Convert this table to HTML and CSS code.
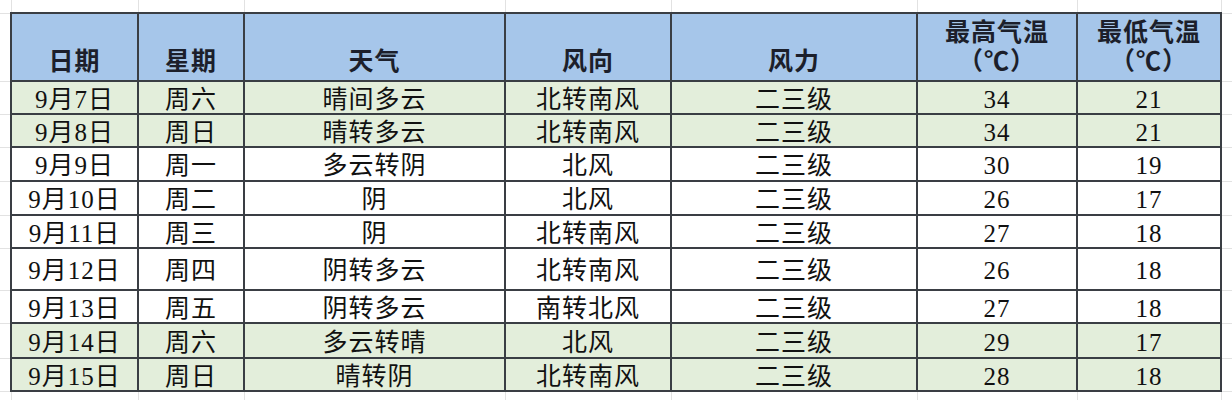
FILE: index.html
```html
<!DOCTYPE html>
<html lang="zh-CN">
<head>
<meta charset="utf-8">
<title>天气预报</title>
<link rel="stylesheet" href="styles.css">
</head>
<body>
<table class="sheet">
  <colgroup>
    <col class="c-edge-l">
    <col class="c-date">
    <col class="c-week">
    <col class="c-weather">
    <col class="c-dir">
    <col class="c-force">
    <col class="c-hi">
    <col class="c-lo">
    <col class="c-edge-r">
  </colgroup>
  <tr class="r-top"><td class="g"></td><td class="g"></td><td class="g"></td><td class="g"></td><td class="g"></td><td class="g"></td><td class="g"></td><td class="g"></td><td class="g"></td></tr>
  <tr class="r-head">
    <td class="g"></td>
    <th>日期</th><th>星期</th><th>天气</th><th>风向</th><th>风力</th>
    <th>最高气温<br>（℃）</th><th>最低气温<br>（℃）</th>
    <td class="g"></td>
  </tr>
  <tr class="r33 green"><td class="g"></td><td>9月7日</td><td>周六</td><td>晴间多云</td><td>北转南风</td><td>二三级</td><td class="num">34</td><td class="num">21</td><td class="g"></td></tr>
  <tr class="r33 green"><td class="g"></td><td>9月8日</td><td>周日</td><td>晴转多云</td><td>北转南风</td><td>二三级</td><td class="num">34</td><td class="num">21</td><td class="g"></td></tr>
  <tr class="r34"><td class="g"></td><td>9月9日</td><td>周一</td><td>多云转阴</td><td>北风</td><td>二三级</td><td class="num">30</td><td class="num">19</td><td class="g"></td></tr>
  <tr class="r34"><td class="g"></td><td>9月10日</td><td>周二</td><td>阴</td><td>北风</td><td>二三级</td><td class="num">26</td><td class="num">17</td><td class="g"></td></tr>
  <tr class="r33"><td class="g"></td><td>9月11日</td><td>周三</td><td>阴</td><td>北转南风</td><td>二三级</td><td class="num">27</td><td class="num">18</td><td class="g"></td></tr>
  <tr class="r42"><td class="g"></td><td>9月12日</td><td>周四</td><td>阴转多云</td><td>北转南风</td><td>二三级</td><td class="num">26</td><td class="num">18</td><td class="g"></td></tr>
  <tr class="r33"><td class="g"></td><td>9月13日</td><td>周五</td><td>阴转多云</td><td>南转北风</td><td>二三级</td><td class="num">27</td><td class="num">18</td><td class="g"></td></tr>
  <tr class="r35 green"><td class="g"></td><td>9月14日</td><td>周六</td><td>多云转晴</td><td>北风</td><td>二三级</td><td class="num">29</td><td class="num">17</td><td class="g"></td></tr>
  <tr class="r33 green"><td class="g"></td><td>9月15日</td><td>周日</td><td>晴转阴</td><td>北转南风</td><td>二三级</td><td class="num">28</td><td class="num">18</td><td class="g"></td></tr>
  <tr class="r-bot"><td class="g"></td><td class="g"></td><td class="g"></td><td class="g"></td><td class="g"></td><td class="g"></td><td class="g"></td><td class="g"></td><td class="g"></td></tr>
</table>
</body>
</html>
```

FILE: styles.css
```css
html, body {
  margin: 0;
  padding: 0;
  background: #ffffff;
}

.sheet {
  width: 1232px;
  table-layout: fixed;
  border-collapse: collapse;
  border-style: hidden;
  font-family: "Liberation Serif", "Noto Sans CJK SC", serif;
  font-size: 25px;
  color: #111111;
}

.c-edge-l { width: 11px; }
.c-date { width: 127px; }
.c-week { width: 106px; }
.c-weather { width: 261px; }
.c-dir { width: 166px; }
.c-force { width: 246px; }
.c-hi { width: 160px; }
.c-lo { width: 144px; }
.c-edge-r { width: 11px; }

.sheet td,
.sheet th {
  border: 2px solid #3a3e44;
  padding: 4px 0 0 0;
  text-align: center;
  vertical-align: middle;
  line-height: 26px;
  letter-spacing: 1px;
  white-space: nowrap;
  overflow: hidden;
}

.sheet td.g {
  border: 1px solid #e2e2e2;
  background: #ffffff;
  padding: 0;
}

.r-top { height: 13px; }
.r-bot { height: 9px; }
.r-head { height: 68px; }
.r33 { height: 33px; }
.r34 { height: 34px; }
.r35 { height: 35px; }
.r42 { height: 42px; }

.r-head th {
  background: #a6c6ea;
  color: #1c1f2b;
  font-weight: bold;
  vertical-align: bottom;
  padding: 0 0 4px 0;
  line-height: 29px;
}

.green td {
  background: #e3eedb;
}

.num {
  letter-spacing: 0.5px;
}
```
